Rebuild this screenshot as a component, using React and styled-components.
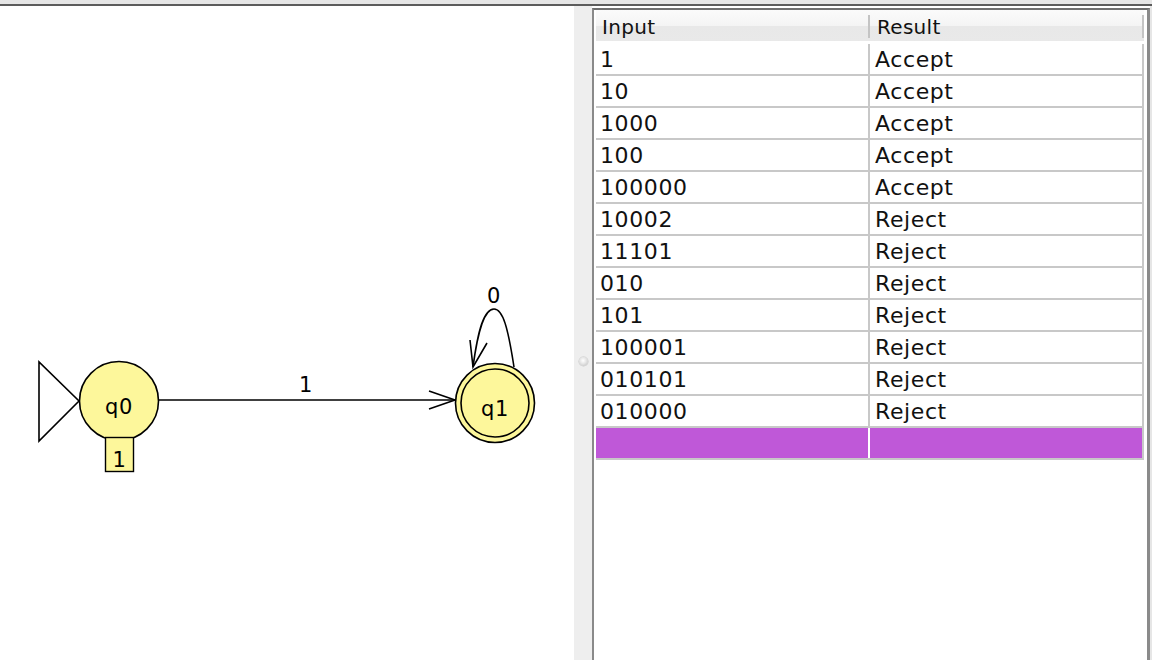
import React from "react";
import styled, { createGlobalStyle } from "styled-components";

// ===== 전역 =====
const GlobalStyle = createGlobalStyle`
  html, body { margin: 0; padding: 0; background: #e6e6e6; }
  body { font-family: "DejaVu Sans", "Liberation Sans", sans-serif; color: #111; }
`;

// 테스트 입력 목록
const rows = [
  { input: "1", result: "Accept" },
  { input: "10", result: "Accept" },
  { input: "1000", result: "Accept" },
  { input: "100", result: "Accept" },
  { input: "100000", result: "Accept" },
  { input: "10002", result: "Reject" },
  { input: "11101", result: "Reject" },
  { input: "010", result: "Reject" },
  { input: "101", result: "Reject" },
  { input: "100001", result: "Reject" },
  { input: "010101", result: "Reject" },
  { input: "010000", result: "Reject" },
];

const STATE_FILL = "#fdf79b";

function Diagram() {
  return (
    <Svg viewBox="0 6 574 654" width="574" height="654">
      {/* 초기 상태 삼각형 */}
      <polygon points="39,362 39,441 79,401" fill="#fff" stroke="#000" strokeWidth="1.6" />

      {/* q0 */}
      <circle cx="119" cy="401" r="39.5" fill={STATE_FILL} stroke="#000" strokeWidth="1.6" />
      <StateLabel x="119" y="414">q0</StateLabel>
      <rect x="105.5" y="437.5" width="28" height="34" fill={STATE_FILL} stroke="#000" strokeWidth="1.4" />
      <StateLabel x="119.5" y="467">1</StateLabel>

      {/* q0 -> q1 */}
      <line x1="159" y1="400" x2="455" y2="400" stroke="#000" strokeWidth="1.6" />
      <polyline points="429,391 455,400 429,409" fill="none" stroke="#000" strokeWidth="1.6" />
      <StateLabel x="306" y="392">1</StateLabel>

      {/* q1 (종결 상태) */}
      <circle cx="495" cy="403" r="39.5" fill={STATE_FILL} stroke="#000" strokeWidth="1.6" />
      <circle cx="495" cy="403" r="34" fill="none" stroke="#000" strokeWidth="1.6" />
      <StateLabel x="495" y="416">q1</StateLabel>

      {/* 자기 루프 */}
      <path d="M514,367 C508,328 503,309 494,309 C484,309 478,330 473,367" fill="none" stroke="#000" strokeWidth="1.6" />
      <polyline points="470,340 473,367 487,343" fill="none" stroke="#000" strokeWidth="1.6" />
      <StateLabel x="494" y="303">0</StateLabel>
    </Svg>
  );
}

export default function App() {
  return (
    <>
      <GlobalStyle />
      <Page>
        <TopStrip />
        <Rule />
        <Main>
          <Canvas>
            <Diagram />
          </Canvas>
          <Divider>
            <Knob />
          </Divider>
          <TablePane>
            <Table>
              <Header>
                <HeadCell>Input</HeadCell>
                <HeadCell $last>Result</HeadCell>
              </Header>
              {rows.map((r, i) => (
                <Row key={i}>
                  <Cell>{r.input}</Cell>
                  <Cell $last>{r.result}</Cell>
                </Row>
              ))}
              <Row>
                <Cell $selected />
                <Cell $selected $last />
              </Row>
            </Table>
          </TablePane>
        </Main>
      </Page>
    </>
  );
}

/* ===== 레이아웃 ===== */
const Page = styled.div`
  width: 1152px;
  height: 660px;
  display: flex;
  flex-direction: column;
  overflow: hidden;
  background: #e6e6e6;
`;

const TopStrip = styled.div`
  height: 4px;
  background: #e6e6e6;
`;

const Rule = styled.div`
  height: 2px;
  background: #5c5c5c;
`;

const Main = styled.div`
  flex: 1;
  display: flex;
  min-height: 0;
`;

const Canvas = styled.div`
  width: 574px;
  background: #fff;
  overflow: hidden;
`;

const Svg = styled.svg`
  display: block;
`;

const StateLabel = styled.text`
  font-family: "DejaVu Sans", sans-serif;
  font-size: 21px;
  letter-spacing: 0.6px;
  text-anchor: middle;
  fill: #000;
`;

const Divider = styled.div`
  width: 18px;
  background: #eeeeee;
  display: flex;
  justify-content: center;
  padding-top: 351px;
  box-sizing: border-box;
`;

const Knob = styled.div`
  width: 9px;
  height: 9px;
  border-radius: 50%;
  background: radial-gradient(circle at 45% 40%, #ffffff 0%, #e4e4e4 45%, #b9b9b9 100%);
  box-shadow: 0 0 0 0.5px #c8c8c8;
`;

const TablePane = styled.div`
  width: 558px;
  padding-top: 2px;
  background: #fff;
  box-sizing: border-box;
`;

const Table = styled.div`
  height: 100%;
  border-top: 2px solid #6e6e6e;
  border-left: 2px solid #8a8a8a;
  border-right: 3px solid #8a8a8a;
  box-sizing: border-box;
  padding: 0 3px 0 2px;
  background: #fff;
  display: flex;
  flex-direction: column;
`;

const Header = styled.div`
  height: 31px;
  margin-bottom: 3px;
  display: grid;
  grid-template-columns: 274px 274px;
  background: linear-gradient(#fbfbfb 0%, #f4f4f4 50%, #e8e8e8 52%, #e9e9e9 100%);
`;

const HeadCell = styled.div`
  display: flex;
  align-items: center;
  padding-left: ${({ $last }) => ($last ? "7px" : "6px")};
  padding-top: 2px;
  font-size: 20px;
  letter-spacing: 0.3px;
  color: #111;
  position: relative;
  &::after {
    content: "";
    position: absolute;
    right: 0;
    top: 5px;
    bottom: 3px;
    width: 2px;
    background: #c4c4c4;
  }
`;

const Row = styled.div`
  height: 30px;
  display: grid;
  grid-template-columns: 274px 274px;
  border-bottom: 2px solid #c8c8c8;
`;

const Cell = styled.div`
  display: flex;
  align-items: center;
  padding-left: ${({ $last }) => ($last ? "5px" : "4px")};
  padding-top: 1px;
  font-size: 22px;
  letter-spacing: 0.6px;
  color: #111;
  border-right: 2px solid ${({ $selected, $last }) => ($selected && !$last ? "#fff" : "#c8c8c8")};
  background: ${({ $selected }) => ($selected ? "#bf58d8" : "transparent")};
`;
